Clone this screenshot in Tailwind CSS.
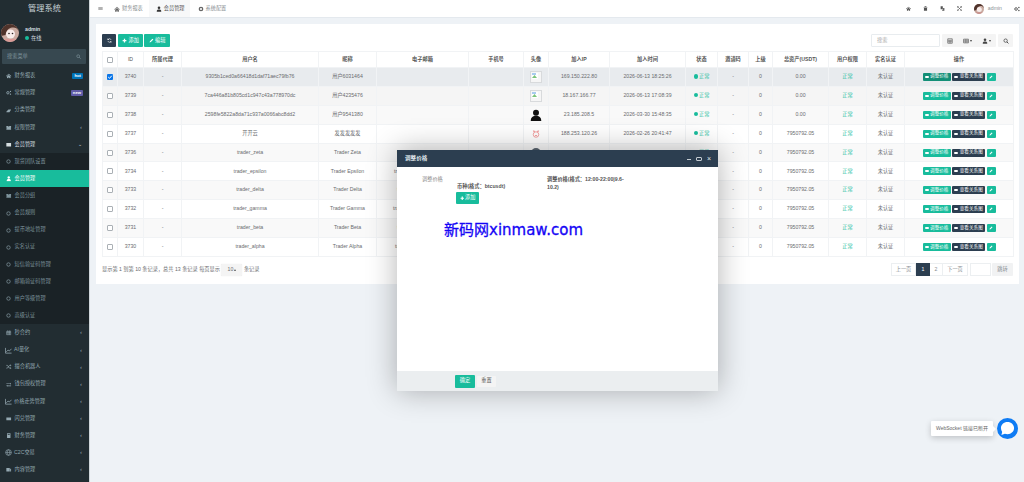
<!DOCTYPE html>
<html lang="zh-CN">
<head>
<meta charset="UTF-8">
<script src="https://cdn.jsdelivr.net/npm/@tailwindcss/browser@4"></script>
<title>管理系统</title>
</head>
<body class="h-[482px] w-[1024px] overflow-hidden bg-[#eef2f6] font-['Liberation_Sans','Noto_Sans_CJK_SC',sans-serif] text-[5.2px] text-[#6a6c6f]">

<svg class="hidden">
  <symbol id="i-home" viewBox="0 0 16 16"><path fill="currentColor" d="M8 2 0 9l1 1 7-6 7 6 1-1zM3 10v5h4v-3h2v3h4v-5L8 5.5z"/></symbol>
  <symbol id="i-circle" viewBox="0 0 16 16"><circle cx="8" cy="8" r="5.5" fill="none" stroke="currentColor" stroke-width="2.5"/></symbol>
  <symbol id="i-user" viewBox="0 0 16 16"><circle cx="8" cy="4.5" r="3.5" fill="currentColor"/><path fill="currentColor" d="M2 15c0-5 2-6 6-6s6 1 6 6z"/></symbol>
  <symbol id="i-cogs" viewBox="0 0 16 16"><circle cx="5.5" cy="8" r="3.5" fill="none" stroke="currentColor" stroke-width="2.5"/><circle cx="13" cy="4" r="2" fill="currentColor"/><circle cx="13" cy="12" r="2" fill="currentColor"/></symbol>
  <symbol id="i-tag" viewBox="0 0 16 16"><path fill="currentColor" d="M1 11 7 4h8l-5 8H1z"/></symbol>
  <symbol id="i-group" viewBox="0 0 16 16"><path fill="currentColor" d="M1 3h5l2 2 2-2h5v5l-2 1 2 1v4H1v-4l2-1-2-1z"/></symbol>
  <symbol id="i-card" viewBox="0 0 16 16"><path fill="currentColor" d="M1 3h14v10H1z"/></symbol>
  <symbol id="i-cal" viewBox="0 0 16 16"><path fill="none" stroke="currentColor" stroke-width="1.8" d="M2 4h12v10H2zM2 8h12M6 4v10M10 4v10M5 1v3M11 1v3"/></symbol>
  <symbol id="i-chart" viewBox="0 0 16 16"><path fill="none" stroke="currentColor" stroke-width="1.8" d="M1 2v12h14M3 11l4-4 3 2 5-5"/></symbol>
  <symbol id="i-random" viewBox="0 0 16 16"><path fill="none" stroke="currentColor" stroke-width="2" d="M1 4h3l6 8h4M1 12h3l6-8h4"/><path fill="currentColor" d="M13 1l3 3-3 3zM13 9l3 3-3 3z"/></symbol>
  <symbol id="i-swap" viewBox="0 0 16 16"><path fill="currentColor" d="M1 4h11V2l3 3-3 3V6H1zM15 10H4V8l-3 3 3 3v-2h11z"/></symbol>
  <symbol id="i-calc" viewBox="0 0 16 16"><path fill="currentColor" d="M3 1h10v14H3zm2 2v2h6V3z"/></symbol>
  <symbol id="i-globe" viewBox="0 0 16 16"><circle cx="8" cy="8" r="6.5" fill="none" stroke="currentColor" stroke-width="1.5"/><path fill="none" stroke="currentColor" stroke-width="1.3" d="M1.5 8h13M8 1.5c-4 4-4 9 0 13M8 1.5c4 4 4 9 0 13"/></symbol>
  <symbol id="i-news" viewBox="0 0 16 16"><path fill="currentColor" d="M1 3h10v10H1zM12 5h3v8h-3z"/></symbol>
  <symbol id="i-bars" viewBox="0 0 16 16"><path fill="currentColor" d="M1 3h14v2H1zM1 7h14v2H1zM1 11h14v2H1z"/></symbol>
  <symbol id="i-cog" viewBox="0 0 16 16"><circle cx="8" cy="8" r="4.5" fill="none" stroke="currentColor" stroke-width="3.5"/></symbol>
  <symbol id="i-trash" viewBox="0 0 16 16"><path fill="currentColor" d="M5 1h6v2h3v2H2V3h3zM3 6h10v9H3z"/></symbol>
  <symbol id="i-lang" viewBox="0 0 16 16"><path fill="currentColor" d="M2 1h7v9H2zM10 6h4v9H7v-3h3z"/></symbol>
  <symbol id="i-expand" viewBox="0 0 16 16"><path fill="none" stroke="currentColor" stroke-width="2" d="M2 2l12 12M14 2 2 14"/><path fill="currentColor" d="M1 1h5L1 6zM15 1h-5l5 5zM1 15h5l-5-5zM15 15h-5l5-5z"/></symbol>
  <symbol id="i-search" viewBox="0 0 16 16"><circle cx="7" cy="7" r="4.5" fill="none" stroke="currentColor" stroke-width="2"/><path stroke="currentColor" stroke-width="2.5" d="m10.5 10.5 4 4"/></symbol>
  <symbol id="i-refresh" viewBox="0 0 16 16"><path fill="none" stroke="currentColor" stroke-width="2" d="M13 6a5.5 5.5 0 0 0-10-1M3 10a5.5 5.5 0 0 0 10 1"/><path fill="currentColor" d="M2 1v5h5zM14 15v-5H9z"/></symbol>
  <symbol id="i-plus" viewBox="0 0 16 16"><path fill="currentColor" d="M6 2h4v4h4v4h-4v4H6v-4H2V6h4z"/></symbol>
  <symbol id="i-pencil" viewBox="0 0 16 16"><path fill="currentColor" d="M11 2l3 3-8 8-4 1 1-4z"/></symbol>
  <symbol id="i-table" viewBox="0 0 16 16"><path fill="none" stroke="currentColor" stroke-width="1.5" d="M2 2h12v12H2zM2 6h12M2 10h12M8 6v8"/></symbol>
  <symbol id="i-grid" viewBox="0 0 16 16"><path fill="none" stroke="currentColor" stroke-width="1.5" d="M1.5 3h13v10h-13zM1.5 8h13M6 3v10M10.5 3v10"/></symbol>
  <symbol id="i-money" viewBox="0 0 16 16"><path fill="currentColor" d="M1 4h14v8H1z"/></symbol>
  <symbol id="i-chat" viewBox="0 0 16 16"><path fill="currentColor" d="M8 1c4 0 7 2.8 7 6.5S12 14 8 14c-1 0-2-.2-2.800-.5L1.500 15l.8-3.300C1.500 10.500 1 9.100 1 7.500 1 3.800 4 1 8 1z"/></symbol>
</svg>

<div class="flex h-[482px]">
  <!-- Sidebar -->
  <aside class="flex h-full w-[90px] shrink-0 flex-col overflow-hidden border-r border-[#cfd6da] bg-[#222d32] text-[#94a8b1]">
    <div class="flex h-[18px] items-center justify-center text-[8.2px] text-[#c8d2d6]">管理系统</div>
    <div class="flex h-[30px] items-center gap-[6px] pl-[1px]">
      <svg class="size-[18px] shrink-0 rounded-full" viewBox="0 0 18 18">
        <rect width="18" height="18" fill="#c9aaa0"/>
        <path fill="#4f332b" d="M0 0h18v7c-2-3-4-4-7-3.500C8 4 5.500 6 4.500 11L0 12z"/>
        <circle cx="9.500" cy="10" r="4.500" fill="#f7ecea"/>
        <circle cx="8" cy="9.500" r=".8" fill="#2a2020"/>
        <circle cx="11.500" cy="9.500" r=".8" fill="#2a2020"/>
        <path fill="#d99a96" d="M3 15h12v3H3z"/>
      </svg>
      <div class="flex flex-col gap-[3px] leading-[6px]">
        <span class="font-bold text-[#d5dde0]">admin</span>
        <span class="flex items-center gap-[2px] text-[#d5dde0]"><i class="size-[4px] rounded-full bg-[#18bc9c]"></i>在线</span>
      </div>
    </div>
    <div class="mx-[1.5px] mt-[1px] flex h-[15px] w-[84px] items-center justify-between rounded-[1px] bg-[#374850] pr-[5px] pl-[5.5px] text-[#7f949c]">
      <span>搜索菜单</span>
      <svg class="size-[5px]"><use href="#i-search"/></svg>
    </div>
    <nav class="mt-[3.5px] flex flex-col">
      <a class="flex h-[17.13px] items-center gap-[3px] pr-[6px] pl-[6px]"><svg class="size-[5.5px]"><use href="#i-home"/></svg>财务报表<span class="ml-auto rounded-[1px] bg-[#0073b7] px-[2px] text-[4.2px] leading-[6px] font-bold text-white">hot</span></a>
      <a class="flex h-[17.13px] items-center gap-[3px] pr-[6px] pl-[6px]"><svg class="size-[5.5px]"><use href="#i-cogs"/></svg>常规管理<span class="ml-auto rounded-[1px] bg-[#605ca8] px-[2px] text-[4.2px] leading-[6px] font-bold text-white">new</span></a>
      <a class="flex h-[17.13px] items-center gap-[3px] pr-[6px] pl-[6px]"><svg class="size-[5.5px]"><use href="#i-tag"/></svg>分类管理</a>
      <a class="flex h-[17.13px] items-center gap-[3px] pr-[7px] pl-[6px]"><svg class="size-[5.5px]"><use href="#i-group"/></svg>权限管理<span class="ml-auto text-[6px]">‹</span></a>
      <a class="flex h-[17.13px] items-center gap-[3px] pr-[7px] pl-[6px] text-[#d5dde0]"><svg class="size-[5.5px]"><use href="#i-card"/></svg>会员管理<span class="ml-auto text-[5px]">⌄</span></a>
      <div class="flex flex-col bg-[#1a2226] text-[#7d929b]">
        <a class="flex h-[17.13px] items-center gap-[3px] pl-[6px]"><svg class="mx-[.25px] size-[5px]"><use href="#i-circle"/></svg>现货团队设置</a>
        <a class="flex h-[17.13px] items-center gap-[3px] bg-[#18bc9c] pl-[6px] text-white"><svg class="size-[5.5px]"><use href="#i-user"/></svg>会员管理</a>
        <a class="flex h-[17.13px] items-center gap-[3px] pl-[6px]"><svg class="size-[5.5px]"><use href="#i-group"/></svg>会员分组</a>
        <a class="flex h-[17.13px] items-center gap-[3px] pl-[6px]"><svg class="mx-[.25px] size-[5px]"><use href="#i-circle"/></svg>会员规则</a>
        <a class="flex h-[17.13px] items-center gap-[3px] pl-[6px]"><svg class="mx-[.25px] size-[5px]"><use href="#i-circle"/></svg>提币地址管理</a>
        <a class="flex h-[17.13px] items-center gap-[3px] pl-[6px]"><svg class="mx-[.25px] size-[5px]"><use href="#i-circle"/></svg>实名认证</a>
        <a class="flex h-[17.13px] items-center gap-[3px] pl-[6px]"><svg class="mx-[.25px] size-[5px]"><use href="#i-circle"/></svg>短信验证码管理</a>
        <a class="flex h-[17.13px] items-center gap-[3px] pl-[6px]"><svg class="mx-[.25px] size-[5px]"><use href="#i-circle"/></svg>邮箱验证码管理</a>
        <a class="flex h-[17.13px] items-center gap-[3px] pl-[6px]"><svg class="mx-[.25px] size-[5px]"><use href="#i-circle"/></svg>用户等级管理</a>
        <a class="flex h-[17.13px] items-center gap-[3px] pl-[6px]"><svg class="mx-[.25px] size-[5px]"><use href="#i-circle"/></svg>高级认证</a>
      </div>
      <a class="flex h-[17.13px] items-center gap-[3px] pr-[7px] pl-[6px]"><svg class="size-[5.5px]"><use href="#i-cal"/></svg>秒合约<span class="ml-auto text-[6px]">‹</span></a>
      <a class="flex h-[17.13px] items-center gap-[2px] pr-[7px] pl-[5px]"><svg class="size-[7px]"><use href="#i-chart"/></svg>AI量化<span class="ml-auto text-[6px]">‹</span></a>
      <a class="flex h-[17.13px] items-center gap-[3px] pr-[7px] pl-[6px]"><svg class="size-[5.5px]"><use href="#i-random"/></svg>撮合机器人<span class="ml-auto text-[6px]">‹</span></a>
      <a class="flex h-[17.13px] items-center gap-[3px] pr-[7px] pl-[6px]"><svg class="size-[5.5px]"><use href="#i-swap"/></svg>钱包授权管理<span class="ml-auto text-[6px]">‹</span></a>
      <a class="flex h-[17.13px] items-center gap-[2px] pr-[7px] pl-[5px]"><svg class="size-[7px]"><use href="#i-chart"/></svg>价格走势管理<span class="ml-auto text-[6px]">‹</span></a>
      <a class="flex h-[17.13px] items-center gap-[3px] pr-[7px] pl-[6px]"><svg class="size-[5.5px]"><use href="#i-money"/></svg>闪兑管理<span class="ml-auto text-[6px]">‹</span></a>
      <a class="flex h-[17.13px] items-center gap-[3px] pr-[7px] pl-[6px]"><svg class="size-[5.5px]"><use href="#i-calc"/></svg>财务管理<span class="ml-auto text-[6px]">‹</span></a>
      <a class="flex h-[17.13px] items-center gap-[2px] pr-[7px] pl-[5px]"><svg class="size-[7px]"><use href="#i-globe"/></svg>C2C交易<span class="ml-auto text-[6px]">‹</span></a>
      <a class="flex h-[17.13px] items-center gap-[3px] pr-[7px] pl-[6px]"><svg class="size-[5.5px]"><use href="#i-news"/></svg>内容管理<span class="ml-auto text-[6px]">‹</span></a>
    </nav>
  </aside>

  <!-- Main -->
  <main class="flex min-w-0 flex-1 flex-col">
    <!-- Top bar -->
    <header class="flex h-[18px] items-center border-b border-[#e4e9ee] bg-white text-[#8a8f93]">
      <svg class="ml-[8px] size-[5px] text-[#666]"><use href="#i-bars"/></svg>
      <a class="ml-[11px] flex h-full items-center gap-[2px]"><svg class="size-[6px] text-[#666]"><use href="#i-home"/></svg>财务报表</a>
      <a class="ml-[6px] flex h-full items-center gap-[2px] bg-[#f7f8f9] pr-[5px] pl-[7px] text-[#555]"><svg class="size-[6px] text-[#333]"><use href="#i-user"/></svg>会员管理</a>
      <a class="flex h-full items-center gap-[2px] pl-[8px]"><svg class="size-[6px] text-[#666]"><use href="#i-cog"/></svg>系统配置</a>
      <div class="ml-auto flex items-center text-[#555]">
        <svg class="size-[5px]"><use href="#i-home"/></svg>
        <svg class="ml-[12px] size-[5px]"><use href="#i-trash"/></svg>
        <svg class="ml-[12px] size-[5px]"><use href="#i-lang"/></svg>
        <svg class="ml-[12px] size-[5px]"><use href="#i-expand"/></svg>
        <svg class="ml-[12px] size-[10px] rounded-full" viewBox="0 0 18 18">
          <rect width="18" height="18" fill="#c9aaa0"/>
          <path fill="#4f332b" d="M0 0h18v7c-2-3-4-4-7-3.500C8 4 5.500 6 4.500 11L0 12z"/>
          <circle cx="9.500" cy="10" r="4.500" fill="#f7ecea"/>
          <path fill="#c9908c" d="M3 15h12v3H3z"/>
        </svg>
        <span class="ml-[4px] text-[#8a8f93]">admin</span>
        <svg class="mr-[4px] ml-[12px] size-[6px]"><use href="#i-cogs"/></svg>
      </div>
    </header>

    <!-- Card -->
    <section class="mt-[6px] ml-[6px] h-[260px] w-[923px] bg-white px-[6px] pt-[10px]">
      <div class="flex h-[17px] items-start">
        <button class="flex h-[13px] w-[14px] items-center justify-center rounded-[1px] bg-[#2c3e50] text-white"><svg class="size-[5px]"><use href="#i-refresh"/></svg></button>
        <button class="ml-[2px] flex h-[13px] w-[25px] items-center justify-center gap-[1.5px] rounded-[1px] bg-[#18bc9c] text-white"><svg class="size-[5px]"><use href="#i-plus"/></svg>添加</button>
        <button class="ml-[1px] flex h-[13px] w-[26px] items-center justify-center gap-[1.5px] rounded-[1px] bg-[#18bc9c] text-white"><svg class="size-[5px]"><use href="#i-pencil"/></svg>编辑</button>
        <div class="ml-auto flex items-center">
          <div class="flex h-[13px] w-[69px] items-center rounded-[1px] border border-[#e8ecef] px-[5px] text-[#aaa]">搜索</div>
          <div class="ml-[2px] flex h-[13px] w-[54px] items-center rounded-[1px] bg-[#f4f4f4] text-[#444]">
            <span class="flex w-[16px] justify-center"><svg class="size-[6px]"><use href="#i-table"/></svg></span>
            <span class="flex w-[19px] items-center justify-center gap-[1px]"><svg class="size-[6px]"><use href="#i-grid"/></svg><i class="border-x-[1.5px] border-t-[2px] border-x-transparent border-t-[#444]"></i></span>
            <span class="flex w-[19px] items-center justify-center gap-[1px]"><svg class="size-[6px]"><use href="#i-user"/></svg><i class="border-x-[1.5px] border-t-[2px] border-x-transparent border-t-[#444]"></i></span>
          </div>
          <div class="ml-[2px] flex h-[13px] w-[15px] items-center justify-center rounded-[1px] bg-[#f4f4f4] text-[#444]"><svg class="size-[6px]"><use href="#i-search"/></svg></div>
        </div>
      </div>

      <table class="w-[911px] table-fixed border-collapse text-center">
        <colgroup>
          <col class="w-[15px]"><col class="w-[26px]"><col class="w-[38px]"><col class="w-[137px]"><col class="w-[58px]"><col class="w-[92px]"><col class="w-[55px]"><col class="w-[25px]"><col class="w-[61px]"><col class="w-[76px]"><col class="w-[32px]"><col class="w-[31px]"><col class="w-[24px]"><col class="w-[56px]"><col class="w-[38px]"><col class="w-[38px]"><col class="w-[109px]">
        </colgroup>
        <thead class="font-bold text-[#555]">
          <tr class="h-[16px] [&>th]:border [&>th]:border-[#f1f3f5] [&>th]:p-0">
            <th><input type="checkbox" class="mx-auto block size-[6px] appearance-none rounded-[1px] border border-[#aab0b5] bg-white"></th>
            <th class="font-normal">ID</th><th>所属代理</th><th>用户名</th><th>昵称</th><th>电子邮箱</th><th>手机号</th><th>头像</th><th>加入IP</th><th>加入时间</th><th>状态</th><th>邀请码</th><th>上级</th><th>总资产(USDT)</th><th>用户权限</th><th>实名认证</th><th>操作</th>
          </tr>
        </thead>
        <tbody id="rows"></tbody>
      </table>

      <div class="mt-[2px] flex h-[22px] items-center">
        <span>显示第 1 到第 10 条记录，总共 13 条记录 每页显示</span>
        <span class="mx-[1.5px] flex h-[12px] w-[21px] items-center justify-center gap-[1px] rounded-[1px] bg-[#f4f4f4] shadow-[0_0_1px_rgba(0,0,0,0.15)]">10<i class="border-x-[1.5px] border-b-[2px] border-x-transparent border-b-[#555]"></i></span>
        <span>条记录</span>
        <div class="ml-auto flex h-[13px] items-stretch text-[#8a8f93]">
          <span class="flex w-[25px] items-center justify-center border border-[#eceff1]">上一页</span>
          <span class="flex w-[14px] items-center justify-center bg-[#2c3e50] text-white">1</span>
          <span class="flex w-[12px] items-center justify-center border-y border-[#eceff1]">2</span>
          <span class="flex w-[26px] items-center justify-center border border-[#eceff1]">下一页</span>
          <span class="ml-[2px] w-[21px] border-[1.5px] border-[#eceff1]"></span>
          <span class="ml-[1px] flex w-[21px] items-center justify-center rounded-[1px] bg-[#f1f2f3]">跳转</span>
        </div>
      </div>
    </section>
  </main>
</div>

<!-- Modal -->
<div class="absolute top-[150px] left-[397px] flex h-[241px] w-[321px] flex-col bg-white shadow-[0_0_28px_rgba(0,0,0,0.3)]">
  <div class="flex h-[17px] items-center bg-[#2c3e50] pr-[7px] pl-[8px] text-[5.6px] font-bold text-[#dfe5ea]">
    <span>调整价格</span>
    <span class="mt-[2px] ml-auto h-[1px] w-[4px] bg-[#c5ccd2]"></span>
    <span class="ml-[5px] h-[4px] w-[6px] rounded-[1px] border border-[#c5ccd2]"></span>
    <span class="ml-[5px] text-[7px] leading-none font-normal text-[#e6eaed]">×</span>
  </div>
  <div class="relative flex-1 text-[#555]">
    <span class="absolute top-[9px] left-[25px] text-[#888]">调整价格</span>
    <div class="absolute top-[16px] left-[60px]">
      <div class="font-bold">币种(格式：btcusdt)</div>
      <button class="mt-[1px] -ml-[1px] flex h-[12px] w-[23px] items-center justify-center gap-[1px] rounded-[1px] bg-[#18bc9c] text-white"><svg class="size-[4.5px]"><use href="#i-plus"/></svg>添加</button>
    </div>
    <div class="absolute top-[8px] left-[150px] w-[80px] leading-[8px] font-bold">调整价格(格式：12:00-22:00|9.6-10.2)</div>
    <div class="absolute top-[53px] left-[47px] font-['DejaVu_Sans','Noto_Sans_CJK_SC',sans-serif] text-[15px] leading-[20px] whitespace-nowrap text-[#1405f5] [-webkit-text-stroke:0.3px_#1405f5]">新码网xinmaw.com</div>
  </div>
  <div class="flex h-[20px] items-center bg-[#ebeef0] pl-[58px]">
    <button class="flex h-[13px] w-[20px] items-center justify-center rounded-[1px] bg-[#18bc9c] text-white">确定</button>
    <button class="ml-[2px] flex h-[11px] w-[19px] items-center justify-center rounded-[1px] bg-[#f4f4f4] text-[#555]">重置</button>
  </div>
</div>

<!-- WebSocket toast -->
<div class="absolute top-[421px] left-[931px] flex h-[15px] w-[62px] items-center justify-center rounded-[1px] bg-white text-[5px] whitespace-nowrap text-[#666] shadow-[0_2px_6px_rgba(0,0,0,0.2)]">WebSocket 链接已断开
  <i class="absolute top-[5px] -right-[3px] border-y-[3px] border-l-[3px] border-y-transparent border-l-white"></i>
</div>
<div class="absolute top-[418px] left-[997px] flex size-[21px] items-center justify-center rounded-full bg-[#0f7cf4] text-white">
  <svg class="size-[15px]"><use href="#i-chat"/></svg>
</div>

<script>
  // Rows of the member table. The email cell sits mostly behind the modal.
  var rows = [
    [3740,'9305b1ced0a66418d1daf71aec79fb76','用户6031464','broken','169.150.222.80','2026-06-13 18:25:26','0.00','',''],
    [3739,'7ca446a81b805cd1c947c43a778970dc','用户4235476','broken','18.167.166.77','2026-06-13 17:08:39','0.00','',''],
    [3738,'2598fe5822a8da71c937a0066abc8dd2','用户9541380','person','23.185.208.5','2026-03-30 15:48:35','0.00','',''],
    [3737,'开开云','发发发发发','pig','188.253.120.26','2026-02-26 20:41:47','7950792.05','',''],
    [3736,'trader_zeta','Trader Zeta','disc','','','7950792.05','trader_zeta','ml-[20px]'],
    [3734,'trader_epsilon','Trader Epsilon','','','','7950792.05','trader_epsilon','ml-[17px]'],
    [3733,'trader_delta','Trader Delta','','','','7950792.05','trader_delta','ml-[20px]'],
    [3732,'trader_gamma','Trader Gamma','','','','7950792.05','trader_gamma','ml-[16px]'],
    [3731,'trader_beta','Trader Beta','','','','7950792.05','trader_beta','ml-[20px]'],
    [3730,'trader_alpha','Trader Alpha','','','','7950792.05','trader_alpha','ml-[18px]']
  ];
  var avatars = {
    broken: '<span class="mx-auto flex size-[12px] border border-[#d8dadc] bg-[#f6f6f6] p-[1px]"><svg class="size-[6px]" viewBox="0 0 6 6"><path fill="#fff" d="M0 0h6v6H0z"/><path fill="#a8cbef" d="M0 0h4v2H0z"/><path fill="#7bc47b" d="M0 5l2.500-3L5 5z"/></svg></span>',
    person: '<svg class="mx-auto block size-[12px]" viewBox="0 0 16 16"><circle cx="8" cy="5" r="4" fill="#111"/><path fill="#111" d="M1 16c0-5 3-7 7-7s7 2 7 7z"/></svg>',
    pig: '<svg class="mx-auto block size-[8px]" viewBox="0 0 16 16"><circle cx="8" cy="9" r="5.5" fill="#fff" stroke="#ef7a7a" stroke-width="1.4"/><path fill="none" stroke="#ef7a7a" stroke-width="1.4" d="M4 4 3 1.5 6 3M12 4l1-2.500L10 3M6 11h4"/></svg>',
    disc: '<span class="mx-auto block size-[10px] rounded-full bg-[#5a6570]"></span>'
  };
  var checkOn = '<span class="mx-auto block size-[6px] rounded-[1px] bg-[#0a76e8]"><svg class="block size-[6px]" viewBox="0 0 6 6"><path fill="none" stroke="#fff" d="m1.200 3 1.300 1.300 2.300-2.600"/></svg></span>';
  var checkOff = '<input type="checkbox" class="mx-auto block size-[6px] appearance-none rounded-[1px] border border-[#aab0b5] bg-white">';
  var html = '';
  rows.forEach(function (r, i) {
    var sel = i === 0;
    var bg = 'bg-white';
    if (sel) bg = 'bg-[#e8ebee]';
    else if (i === 1) bg = 'bg-[#f5f5f5]';
    else if (i === 2 || (i > 3 && i % 2 === 0)) bg = 'bg-[#f9f9f9]';
    html += '<tr class="h-[18.9px] ' + bg + ' [&>td]:overflow-hidden [&>td]:border [&>td]:border-[#f1f3f5] [&>td]:p-0 [&>td]:whitespace-nowrap">' +
      '<td>' + (sel ? checkOn : checkOff) + '</td>' +
      '<td>' + r[0] + '</td><td>-</td><td>' + r[1] + '</td><td>' + r[2] + '</td>' +
      '<td class="text-left"><span class="block ' + r[8] + '">' + r[7] + '</span></td><td></td><td>' + (avatars[r[3]] || '') + '</td>' +
      '<td>' + r[4] + '</td><td>' + r[5] + '</td>' +
      '<td class="text-[#18bc9c]"><i class="mr-[1px] inline-block size-[4.5px] rounded-full bg-[#18bc9c] align-[-0.5px]"></i>正常</td>' +
      '<td>-</td><td>0</td><td>' + r[6] + '</td><td class="text-[#18bc9c]">正常</td><td>未认证</td>' +
      '<td><span class="flex items-center justify-center gap-[1.5px]">' +
      '<span class="flex h-[8px] w-[28px] items-center justify-center gap-[1.5px] rounded-[1px] text-[4.6px] text-white ' + (sel ? 'bg-[#138f77]' : 'bg-[#18bc9c]') + '"><svg class="size-[4px]"><use href="#i-money"/></svg>调整价格</span>' +
      '<span class="flex h-[8px] w-[33px] items-center justify-center gap-[1.5px] rounded-[1px] bg-[#2c3e50] text-[4.6px] text-white"><svg class="size-[4px]"><use href="#i-money"/></svg>查看关系图</span>' +
      '<span class="flex h-[8px] w-[9px] items-center justify-center rounded-[1px] bg-[#18bc9c] text-white"><svg class="size-[4px]"><use href="#i-pencil"/></svg></span>' +
      '</span></td></tr>';
  });
  document.getElementById('rows').innerHTML = html;
</script>
</body>
</html>
